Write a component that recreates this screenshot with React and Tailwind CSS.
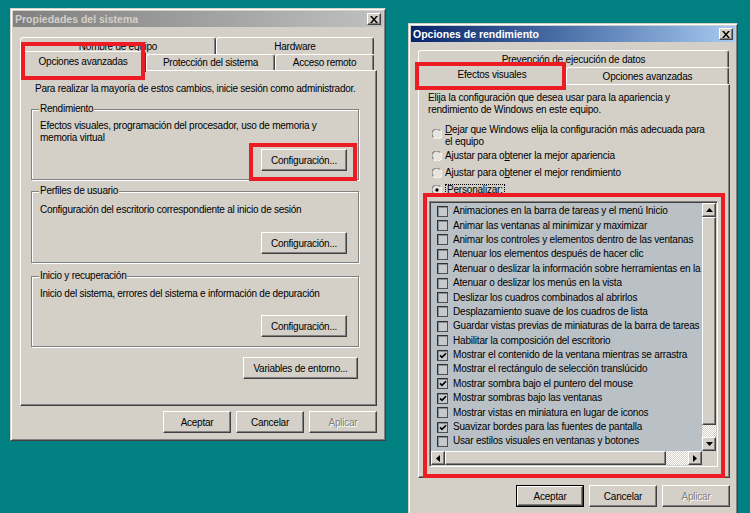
import React from "react";

const RAISED =
  "border border-t-white border-l-white border-r-[#404040] border-b-[#404040] bg-[#d4d0c8] shadow-[inset_-1px_-1px_0_#808080]";

function Btn({ className = "", children, isDefault, disabled }) {
  const inner = (
    <div className={"flex h-full w-full items-center justify-center " + RAISED}>
      <span
        className={
          disabled
            ? "text-[#808080] [text-shadow:1px_1px_0_#fff]"
            : "text-black"
        }
      >
        {children}
      </span>
    </div>
  );
  if (isDefault)
    return <div className={"border border-black " + className}>{inner}</div>;
  return <div className={className}>{inner}</div>;
}

function CloseBtn() {
  return (
    <div className="flex h-[12px] w-[14px] items-center justify-center border border-t-white border-l-white border-r-[#404040] border-b-[#404040] bg-[#d4d0c8] shadow-[inset_-1px_-1px_0_#808080]">
      <svg width="8" height="7" viewBox="0 0 8 7">
        <path
          d="M0 0h2l2 2.4L6 0h2L5 3.5 8 7H6L4 4.6 2 7H0l3-3.5z"
          fill="#000"
        />
      </svg>
    </div>
  );
}

function TitleBar({ title, active }) {
  return (
    <div
      className={
        "flex h-[16px] shrink-0 items-center justify-between pl-[2px] pr-[2px] " +
        (active
          ? "bg-linear-to-r from-[#0a246a] to-[#a6caf0] text-white"
          : "bg-linear-to-r from-[#808080] to-[#c0c0c0] text-[#d4d0c8]")
      }
    >
      <span className="text-[10.5px] font-bold leading-none tracking-normal">
        {title}
      </span>
      <CloseBtn />
    </div>
  );
}

function Tab({ className = "", children }) {
  return (
    <div
      className={
        "flex items-center justify-center whitespace-nowrap rounded-t-[3px] border-t border-l border-r border-t-white border-l-white border-r-[#404040] bg-[#d4d0c8] shadow-[inset_-1px_0_0_#808080] " +
        className
      }
    >
      {children}
    </div>
  );
}

const PANEL =
  "border border-t-white border-l-white border-r-[#404040] border-b-[#404040] shadow-[inset_-1px_-1px_0_#808080]";

function Group({ label, className = "", children }) {
  return (
    <div
      className={
        "relative flex w-[328px] flex-col border border-[#808080] pl-[8px] pr-[11px] shadow-[inset_1px_1px_0_#fff,1px_1px_0_#fff] " +
        className
      }
    >
      <span className="absolute -top-[7px] left-[7px] bg-[#d4d0c8] px-[1px] leading-[12px]">
        {label}
      </span>
      {children}
    </div>
  );
}

function Radio({ checked, className = "" }) {
  return (
    <svg width="10" height="10" viewBox="0 0 12 12" className={"shrink-0 " + className}>
      <circle cx="6" cy="6" r="5.2" fill="#e6e4de" />
      <path d="M1.6 9.4 A5.4 5.4 0 0 1 9.4 1.6" stroke="#808080" strokeWidth="1.3" fill="none" />
      <path d="M10.4 2.6 A5.4 5.4 0 0 1 2.6 10.4" stroke="#ffffff" strokeWidth="1.3" fill="none" />
      {checked && <circle cx="6" cy="6" r="2" fill="#000" />}
    </svg>
  );
}

function Check({ checked }) {
  return (
    <div className="flex h-[11px] w-[11px] shrink-0 items-center justify-center border border-t-[#303030] border-l-[#303030] border-r-[#505050] border-b-[#505050] bg-[#c6cacd] shadow-[inset_1px_1px_0_#8a8e92]">
      {checked && (
        <svg width="8" height="7" viewBox="0 0 8 7">
          <path d="M1 3.4 L3 5.4 L7 1.2" stroke="#000" strokeWidth="1.6" fill="none" />
        </svg>
      )}
    </div>
  );
}

function Arrow({ dir }) {
  const pts = {
    up: "0,4 3.5,0 7,4",
    down: "0,0 3.5,4 7,0",
    left: "4,0 0,3.5 4,7",
    right: "0,0 4,3.5 0,7",
  }[dir];
  const vertical = dir === "up" || dir === "down";
  return (
    <div className={"flex shrink-0 items-center justify-center " + RAISED + " h-[14px] w-[14px]"}>
      <svg width={vertical ? 7 : 4} height={vertical ? 4 : 7}>
        <polygon points={pts} fill="#000" />
      </svg>
    </div>
  );
}

const CHECKER =
  "bg-[repeating-conic-gradient(#ffffff_0%_25%,#d4d0c8_0%_50%)] bg-[length:2px_2px]";

const items = [
  ["Animaciones en la barra de tareas y el menú Inicio", false],
  ["Animar las ventanas al minimizar y maximizar", false],
  ["Animar los controles y elementos dentro de las ventanas", false],
  ["Atenuar los elementos después de hacer clic", false],
  ["Atenuar o deslizar la información sobre herramientas en la vista", false],
  ["Atenuar o deslizar los menús en la vista", false],
  ["Deslizar los cuadros combinados al abrirlos", false],
  ["Desplazamiento suave de los cuadros de lista", false],
  ["Guardar vistas previas de miniaturas de la barra de tareas", false],
  ["Habilitar la composición del escritorio", false],
  ["Mostrar el contenido de la ventana mientras se arrastra", true],
  ["Mostrar el rectángulo de selección translúcido", false],
  ["Mostrar sombra bajo el puntero del mouse", true],
  ["Mostrar sombras bajo las ventanas", true],
  ["Mostrar vistas en miniatura en lugar de iconos", false],
  ["Suavizar bordes para las fuentes de pantalla", true],
  ["Usar estilos visuales en ventanas y botones", false],
];

const WINDOW =
  "absolute flex flex-col border border-t-[#d4d0c8] border-l-[#d4d0c8] border-r-[#404040] border-b-[#404040] bg-[#d4d0c8] p-[2px] shadow-[inset_1px_1px_0_#fff,inset_-1px_-1px_0_#808080]";

function SystemProps() {
  return (
    <div className={WINDOW + " left-[10px] top-[8px] h-[433px] w-[376px] tracking-[-0.25px]"}>
      <TitleBar title="Propiedades del sistema" />
      <div className="mt-[10px] flex flex-col pl-[7px] pr-[6px]">
        <div className="flex h-[17px]">
          <Tab className="h-[17px] w-[196px]">Nombre de equipo</Tab>
          <Tab className="h-[17px] w-[158px]">Hardware</Tab>
        </div>
        <div className="flex h-[16px] items-start">
          <Tab className="relative z-10 -mt-[3px] h-[21px] w-[126px] pb-[2px]">
            Opciones avanzadas
          </Tab>
          <Tab className="h-[16px] w-[129px]">Protección del sistema</Tab>
          <Tab className="h-[16px] w-[99px]">Acceso remoto</Tab>
        </div>
        <div className={PANEL + " flex h-[336px] flex-col pl-[10px]"}>
          <p className="ml-[4px] mt-[12px] leading-[12px]">
            Para realizar la mayoría de estos cambios, inicie sesión como administrador.
          </p>
          <Group label="Rendimiento" className="mt-[14px] h-[71px] pt-[10px]">
            <p className="leading-[12px]">
              Efectos visuales, programación del procesador, uso de memoria y
              <br />
              memoria virtual
            </p>
            <Btn className="mt-[5px] h-[22px] w-[86px] self-end">Configuración...</Btn>
          </Group>
          <Group label="Perfiles de usuario" className="mt-[11px] h-[72px] pt-[12px]">
            <p className="leading-[12px]">
              Configuración del escritorio correspondiente al inicio de sesión
            </p>
            <Btn className="mt-[16px] h-[22px] w-[86px] self-end">Configuración...</Btn>
          </Group>
          <Group label="Inicio y recuperación" className="mt-[13px] h-[71px] pt-[11px]">
            <p className="leading-[12px]">
              Inicio del sistema, errores del sistema e información de depuración
            </p>
            <Btn className="mt-[15px] h-[22px] w-[86px] self-end">Configuración...</Btn>
          </Group>
          <div className="mt-[10px] flex w-[327px] justify-end">
            <Btn className="h-[22px] w-[115px]">Variables de entorno...</Btn>
          </div>
        </div>
        <div className="mt-[5px] flex justify-end gap-[5px]">
          <Btn className="h-[22px] w-[68px]">Aceptar</Btn>
          <Btn className="h-[22px] w-[68px]">Cancelar</Btn>
          <Btn className="h-[22px] w-[68px]" disabled>
            Aplicar
          </Btn>
        </div>
      </div>
    </div>
  );
}

function PerfOptions() {
  return (
    <div className={WINDOW + " left-[408px] top-[23px] h-[496px] w-[330px] tracking-[-0.2px]"}>
      <TitleBar active title="Opciones de rendimiento" />
      <div className="mt-[8px] flex flex-col pl-[7px] pr-[5px]">
        <div className="flex h-[17px]">
          <Tab className="h-[17px] w-[311px]">Prevención de ejecución de datos</Tab>
        </div>
        <div className="flex h-[17px] items-start">
          <Tab className="relative z-10 -mt-[3px] h-[22px] w-[148px] pb-[2px]">
            Efectos visuales
          </Tab>
          <Tab className="h-[17px] w-[163px]">Opciones avanzadas</Tab>
        </div>
        <div className={PANEL + " flex h-[394px] flex-col pl-[9px]"}>
          <p className="mt-[7px] leading-[12px]">
            Elija la configuración que desea usar para la apariencia y
            <br />
            rendimiento de Windows en este equipo.
          </p>
          <div className="ml-[4px] mt-[8px] flex flex-col">
            <div className="flex h-[26px] items-start gap-[3px]">
              <Radio className="mt-[5px]" />
              <p className="leading-[12px]">
                <span className="underline">D</span>ejar que Windows elija la configuración más adecuada para
                <br />
                el equipo
              </p>
            </div>
            <div className="flex h-[17px] items-start gap-[3px]">
              <Radio className="mt-[1px]" />
              <p className="leading-[12px]">
                Ajustar para o<span className="underline">b</span>tener la mejor apariencia
              </p>
            </div>
            <div className="flex h-[17px] items-start gap-[3px]">
              <Radio className="mt-[1px]" />
              <p className="leading-[12px]">
                Ajustar para o<span className="underline">b</span>tener el mejor rendimiento
              </p>
            </div>
            <div className="flex h-[12px] items-start gap-[3px]">
              <Radio checked className="mt-[1px]" />
              <p className="border border-dotted border-black px-[1px] leading-[10px]">
                <span className="underline">P</span>ersonalizar:
              </p>
            </div>
          </div>
          <div className="ml-[1px] mt-[5px] h-[266px] w-[289px] border border-t-[#808080] border-l-[#808080] border-r-white border-b-white p-[1px] shadow-[inset_1px_1px_0_#404040,inset_-1px_-1px_0_#d4d0c8]">
            <div className="grid h-full w-full grid-cols-[1fr_14px] grid-rows-[1fr_14px]">
              <div className="overflow-hidden bg-[#bac1c6] pl-[6px] pt-[1px]">
                {items.map(([t, c]) => (
                  <div key={t} className="flex h-[14.4px] items-center gap-[5px] whitespace-nowrap">
                    <Check checked={c} />
                    <span className="leading-none">{t}</span>
                  </div>
                ))}
              </div>
              <div className="flex flex-col">
                <Arrow dir="up" />
                <div className={RAISED + " flex-1"} />
                <div className={CHECKER + " h-[12px]"} />
                <Arrow dir="down" />
              </div>
              <div className="flex">
                <Arrow dir="left" />
                <div className={RAISED + " w-[221px]"} />
                <div className={CHECKER + " flex-1"} />
                <Arrow dir="right" />
              </div>
              <div className="bg-[#d4d0c8]" />
            </div>
          </div>
        </div>
        <div className="mt-[7px] flex justify-end gap-[5px]">
          <Btn isDefault className="h-[22px] w-[68px]">
            Aceptar
          </Btn>
          <Btn className="h-[22px] w-[68px]">Cancelar</Btn>
          <Btn className="h-[22px] w-[68px]" disabled>
            Aplicar
          </Btn>
        </div>
      </div>
    </div>
  );
}

export default function App() {
  return (
    <div className="relative h-[513px] w-[750px] overflow-hidden bg-[#008080] font-['Liberation_Sans',Arial,sans-serif] text-[10px] text-black">
      <SystemProps />
      <PerfOptions />
      {/* red highlight annotations */}
      <div className="absolute left-[21px] top-[42px] z-20 h-[38px] w-[124px] border-[4px] border-[#ed1c24]" />
      <div className="absolute left-[249px] top-[143px] z-20 h-[38px] w-[108px] border-[4px] border-[#ed1c24]" />
      <div className="absolute left-[415px] top-[62px] z-20 h-[28px] w-[151px] border-[4px] border-[#ed1c24]" />
      <div className="absolute left-[423px] top-[193px] z-20 h-[285px] w-[302px] border-[4px] border-[#ed1c24]" />
    </div>
  );
}
